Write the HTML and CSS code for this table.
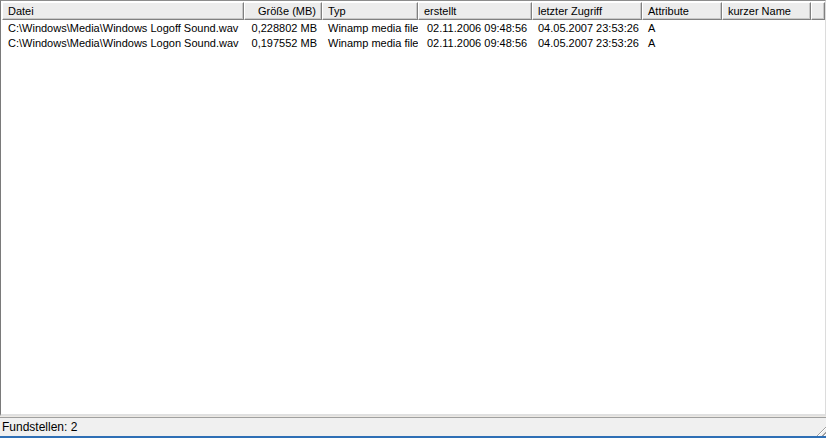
FILE: index.html
```html
<!DOCTYPE html>
<html lang="de">
<head>
    <meta charset="UTF-8">
    <title>Suchergebnis</title>
    <link rel="stylesheet" href="styles.css">
</head>
<body>
    <div class="fenster">
        <div class="liste">
            <div class="kopf">
                <span class="spalte c-datei">Datei</span>
                <span class="spalte c-groesse rechts">Größe (MB)</span>
                <span class="spalte c-typ">Typ</span>
                <span class="spalte c-erstellt">erstellt</span>
                <span class="spalte c-zugriff">letzter Zugriff</span>
                <span class="spalte c-attr">Attribute</span>
                <span class="spalte c-kurz">kurzer Name</span>
                <span class="spalte c-rest"></span>
            </div>
            <div class="zeilen">
                <div class="zeile">
                    <span class="zelle c-datei">C:\Windows\Media\Windows Logoff Sound.wav</span>
                    <span class="zelle c-groesse rechts">0,228802 MB</span>
                    <span class="zelle c-typ">Winamp media file</span>
                    <span class="zelle c-erstellt">02.11.2006 09:48:56</span>
                    <span class="zelle c-zugriff">04.05.2007 23:53:26</span>
                    <span class="zelle c-attr">A</span>
                    <span class="zelle c-kurz"></span>
                </div>
                <div class="zeile">
                    <span class="zelle c-datei">C:\Windows\Media\Windows Logon Sound.wav</span>
                    <span class="zelle c-groesse rechts">0,197552 MB</span>
                    <span class="zelle c-typ">Winamp media file</span>
                    <span class="zelle c-erstellt">02.11.2006 09:48:56</span>
                    <span class="zelle c-zugriff">04.05.2007 23:53:26</span>
                    <span class="zelle c-attr">A</span>
                    <span class="zelle c-kurz"></span>
                </div>
            </div>
        </div>
        <div class="status">
            <span>Fundstellen: 2</span>
            <span class="griff"></span>
        </div>
    </div>
</body>
</html>
```

FILE: styles.css
```css
html, body {
    margin: 0;
    padding: 0;
}
body {
    width: 826px;
    height: 438px;
    background: #ece9e4;
    font-family: "Liberation Sans", Arial, sans-serif;
    font-size: 11px;
    color: #000;
    overflow: hidden;
}
.fenster {
    display: flex;
    flex-direction: column;
    height: 438px;
    border-bottom: 2px solid #2f6fb5;
    box-sizing: border-box;
}
.liste {
    flex: 1;
    display: flex;
    flex-direction: column;
    background: #fff;
    border-top: 1px solid #8c8c8c;
    border-left: 1px solid #7a7a7a;
    border-right: 1px solid #dcdcdc;
    border-bottom: 2px solid #e0e0e0;
    margin-bottom: 1px;
    padding-top: 1px;
    padding-left: 1px;
}
.kopf {
    display: flex;
    height: 18px;
}
.spalte {
    box-sizing: border-box;
    height: 18px;
    line-height: 16px;
    padding: 0 5px 0 5px;
    background: #ececec;
    border-top: 1px solid #fff;
    border-left: 1px solid #fff;
    border-right: 1px solid #808080;
    border-bottom: 1px solid #808080;
    box-shadow: inset -1px -1px 0 #c8c8c8;
    white-space: nowrap;
    overflow: hidden;
}
.c-datei { width: 242px; }
.c-groesse { width: 78px; }
.c-typ { width: 96px; }
.c-erstellt { width: 114px; }
.c-zugriff { width: 110px; }
.c-attr { width: 80px; }
.c-kurz { width: 89px; }
.c-rest { flex: 1; padding: 0; }
.rechts { text-align: right; }
.zeilen {
    padding-top: 1px;
}
.zeile {
    display: flex;
    height: 15px;
    line-height: 15px;
}
.zelle {
    box-sizing: border-box;
    padding: 0 5px 0 6px;
    white-space: nowrap;
    overflow: hidden;
}
.zeile .c-datei { padding-left: 6px; }
.zeile .c-erstellt { padding-left: 9px; }
.status {
    display: flex;
    justify-content: space-between;
    align-items: center;
    height: 18px;
    padding-left: 2px;
    font-size: 12px;
    background: #f0f0f0;
    border-top: 1px solid #a0a0a0;
}
.griff {
    width: 12px;
    height: 12px;
    align-self: flex-end;
    background: repeating-linear-gradient(135deg, transparent 0 2px, #a0a0a0 2px 3px, #fff 3px 4px);
    clip-path: polygon(100% 0, 100% 100%, 0 100%);
}
```
